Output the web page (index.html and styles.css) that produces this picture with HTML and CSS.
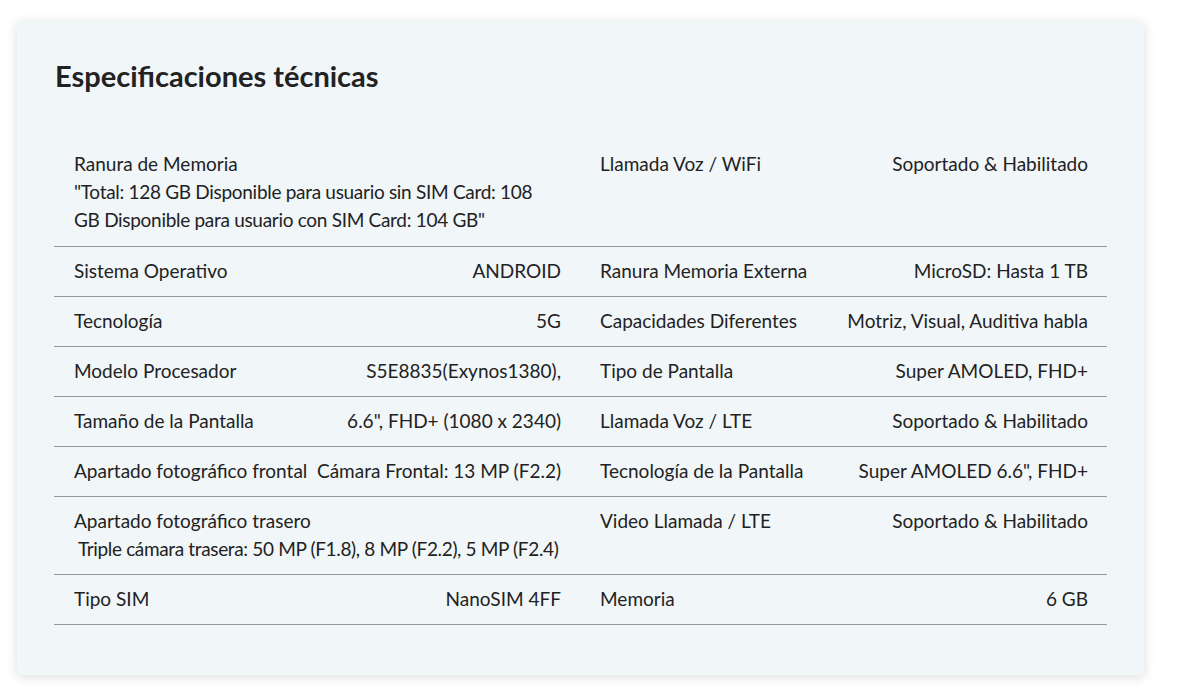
FILE: index.html
```html
<!DOCTYPE html>
<html lang="es">
<head>
<meta charset="utf-8">
<link rel="stylesheet" href="styles.css">
</head>
<body>
<section class="card">
  <h2 class="title">Especificaciones técnicas</h2>
  <div class="specs">
    <div class="cell cell--stack cell--first">
      <span class="label">Ranura de Memoria</span>
      <span class="value">"Total: 128 GB Disponible para usuario sin SIM Card: 108 GB Disponible para usuario con SIM Card: 104 GB"</span>
    </div>
    <div class="cell cell--first">
      <span class="label">Llamada Voz / WiFi</span>
      <span class="value">Soportado &amp; Habilitado</span>
    </div>
    <div class="cell">
      <span class="label">Sistema Operativo</span>
      <span class="value">ANDROID</span>
    </div>
    <div class="cell">
      <span class="label">Ranura Memoria Externa</span>
      <span class="value">MicroSD: Hasta 1 TB</span>
    </div>
    <div class="cell">
      <span class="label">Tecnología</span>
      <span class="value">5G</span>
    </div>
    <div class="cell">
      <span class="label">Capacidades Diferentes</span>
      <span class="value">Motriz, Visual, Auditiva habla</span>
    </div>
    <div class="cell">
      <span class="label">Modelo Procesador</span>
      <span class="value">S5E8835(Exynos1380),</span>
    </div>
    <div class="cell">
      <span class="label">Tipo de Pantalla</span>
      <span class="value">Super AMOLED, FHD+</span>
    </div>
    <div class="cell">
      <span class="label">Tamaño de la Pantalla</span>
      <span class="value">6.6", FHD+ (1080 x 2340)</span>
    </div>
    <div class="cell">
      <span class="label">Llamada Voz / LTE</span>
      <span class="value">Soportado &amp; Habilitado</span>
    </div>
    <div class="cell">
      <span class="label">Apartado fotográfico frontal</span>
      <span class="value">Cámara Frontal: 13 MP (F2.2)</span>
    </div>
    <div class="cell">
      <span class="label">Tecnología de la Pantalla</span>
      <span class="value">Super AMOLED 6.6", FHD+</span>
    </div>
    <div class="cell cell--stack">
      <span class="label">Apartado fotográfico trasero</span>
      <span class="value value--line">&nbsp;Triple cámara trasera: 50 MP (F1.8), 8 MP (F2.2), 5 MP (F2.4)</span>
    </div>
    <div class="cell">
      <span class="label">Video Llamada / LTE</span>
      <span class="value">Soportado &amp; Habilitado</span>
    </div>
    <div class="cell">
      <span class="label">Tipo SIM</span>
      <span class="value">NanoSIM 4FF</span>
    </div>
    <div class="cell">
      <span class="label">Memoria</span>
      <span class="value">6 GB</span>
    </div>
  </div>
</section>
</body>
</html>
```

FILE: styles.css
```css
html, body {
  margin: 0;
  padding: 0;
  background: #ffffff;
}
body {
  padding: 21px 33px 16px 17px;
  font-family: Lato, "Liberation Sans", sans-serif;
  color: #222222;
}
.card {
  width: 1127px;
  box-sizing: border-box;
  background: #f1f6f9;
  border-radius: 4px;
  box-shadow: 0 2px 12px rgba(0, 0, 0, 0.14);
  padding: 38px 37px 50px 37px;
}
.title {
  margin: 0 0 0 1px;
  font-size: 29px;
  line-height: 34px;
  font-weight: 700;
  color: #222222;
}
.specs {
  margin-top: 47px;
  display: grid;
  grid-template-columns: 526px 527px;
}
.cell {
  display: flex;
  justify-content: space-between;
  align-items: flex-start;
  gap: 8px;
  padding: 10px 19px 11px 20px;
  border-bottom: 1px solid #999999;
  font-size: 19px;
  line-height: 28px;
  white-space: nowrap;
}
.cell--first {
  padding-bottom: 12px;
}
.cell--stack {
  flex-direction: column;
  gap: 0;
  white-space: normal;
}
.cell--stack .value {
  padding-right: 4px;
  letter-spacing: -0.3px;
}
.cell--stack .value--line {
  padding-right: 0;
  white-space: nowrap;
  letter-spacing: -0.35px;
}
```
